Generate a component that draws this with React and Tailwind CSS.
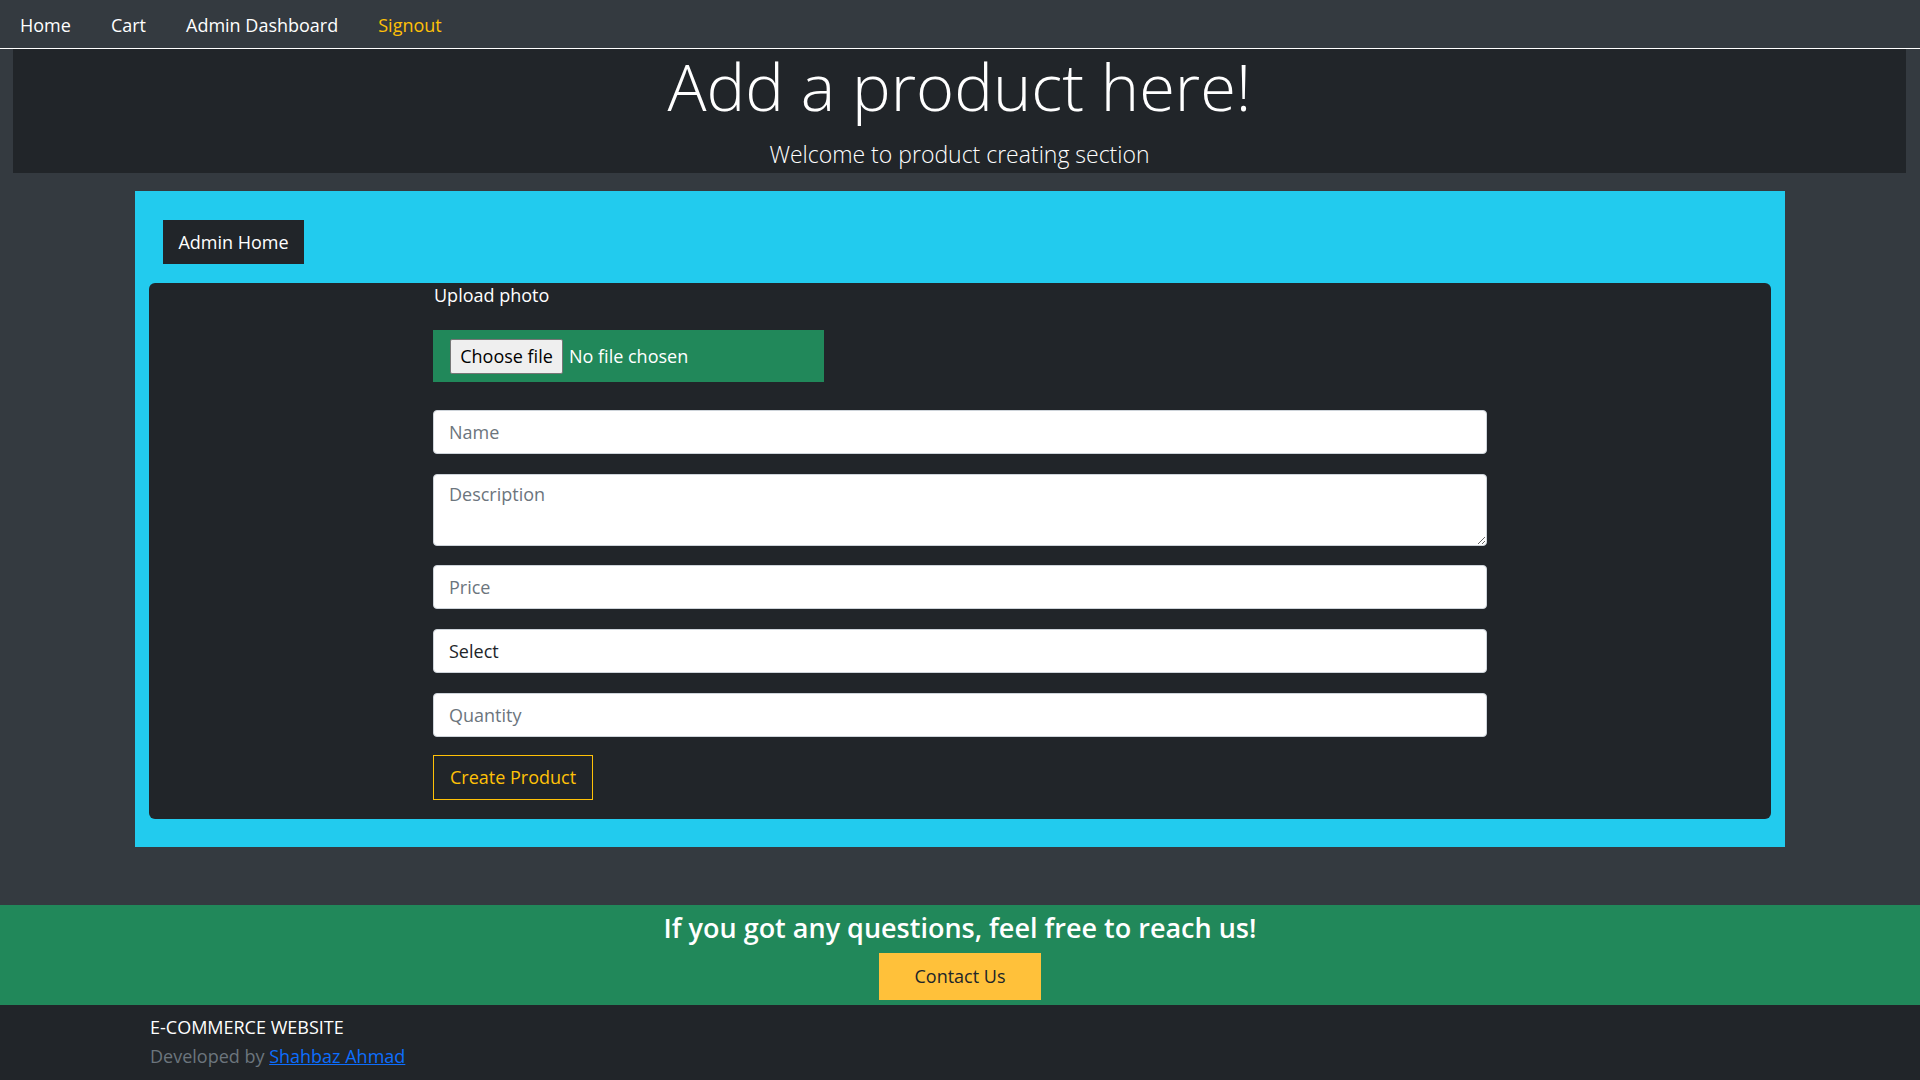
export default function App() {
  const inputCls =
    "block w-full h-[44px] rounded-[4px] border border-[#ced4da] bg-white px-[15px] text-[18px] text-[#212529] placeholder:text-[#6c757d] outline-none";
  return (
    <div className="min-h-screen bg-[#343a40] font-['Open_Sans',sans-serif] text-[18px]">
      <nav className="flex h-[49px] items-center border-b border-white pt-[2px]">
        <a className="px-[20px] text-white">Home</a>
        <a className="px-[20px] text-white">Cart</a>
        <a className="px-[20px] text-white">Admin Dashboard</a>
        <a className="px-[20px] text-[#ffc107]">Signout</a>
      </nav>

      <div className="ml-[13px] mr-[14px] h-[124px] bg-[#212529] pt-[5px] text-center text-white">
        <h1 className="text-[65px] font-light leading-none">Add a product here!</h1>
        <p className="mt-[24px] text-[23px] font-light leading-none">Welcome to product creating section</p>
      </div>

      <div className="mx-[135px] mt-[18px] bg-[#22cbee] px-[14px] pb-[28px] pt-[29px]">
        <button className="mb-[19px] ml-[14px] flex h-[44px] w-[141px] items-center justify-center bg-[#212529] text-white">
          Admin Home
        </button>
        <div className="rounded-[6px] bg-[#212529] px-[284px] pb-[19px]">
          <label className="block pl-[1px] leading-[24px] text-white">Upload photo</label>
          <div className="mt-[23px] flex h-[52px] w-[391px] items-center bg-[#21885a] pl-[17px]">
            <span className="flex h-[35px] w-[113px] items-center justify-center rounded-[2px] border border-[#767676] bg-[#efefef] text-black">
              Choose file
            </span>
            <span className="ml-[6px] text-white">No file chosen</span>
          </div>
          <input className={inputCls + " mt-[28px]"} placeholder="Name" />
          <textarea
            className="mt-[20px] block h-[72px] w-full rounded-[4px] border border-[#ced4da] bg-white px-[15px] py-[6px] text-[18px] leading-[27px] text-[#212529] placeholder:text-[#6c757d] outline-none"
            placeholder="Description"
          />
          <input className={inputCls + " mt-[19px]"} placeholder="Price" />
          <select className={inputCls + " mt-[20px] appearance-none"} defaultValue="">
            <option value="">Select</option>
          </select>
          <input className={inputCls + " mt-[20px]"} placeholder="Quantity" />
          <button className="mt-[18px] h-[45px] w-[160px] border border-[#ffc107] text-[#ffc107]">
            Create Product
          </button>
        </div>
      </div>

      <div className="mt-[58px] flex h-[100px] flex-col items-center bg-[#21885a] pt-[9px]">
        <h3 className="text-[27px] font-semibold leading-none text-white">
          If you got any questions, feel free to reach us!
        </h3>
        <button className="mt-[12px] h-[47px] w-[162px] bg-[#ffc13a] text-[#212529]">Contact Us</button>
      </div>

      <footer className="bg-[#212529] pb-[16px] pl-[150px] pt-[10px]">
        <div className="leading-[24px] text-white">E-COMMERCE WEBSITE</div>
        <div className="mt-[5px] leading-[24px] text-[#6c757d]">
          Developed by <a className="text-[#0d6efd] underline">Shahbaz Ahmad</a>
        </div>
      </footer>
    </div>
  );
}
